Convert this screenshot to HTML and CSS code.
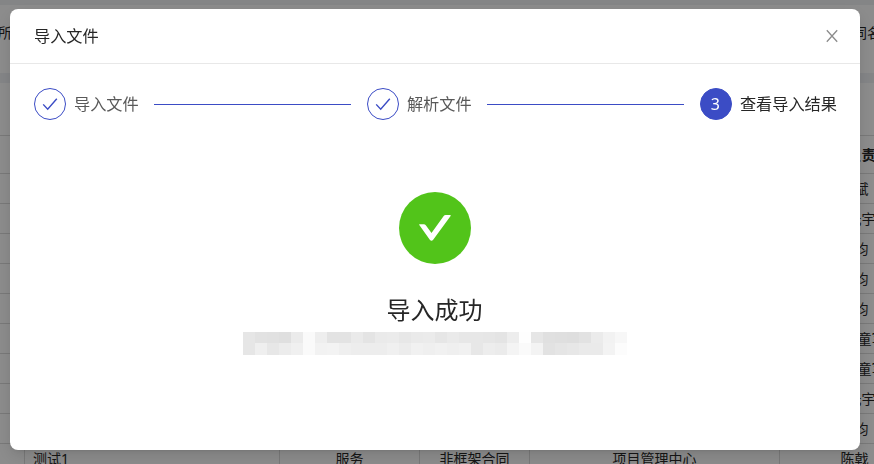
FILE: index.html
```html
<!DOCTYPE html>
<html lang="zh-CN">
<head>
<meta charset="utf-8">
<title>导入文件</title>
<link rel="stylesheet" href="styles.css">
</head>
<body>
<main class="page">
  <section class="filters"><span>所</span><span>同名</span></section>
  <section class="card">
    <div class="table">
      <div class="row head"><i></i><i></i><i></i><i></i><i></i><b>项目负责人</b></div>
      <div class="row"><i></i><i></i><i></i><i></i><i></i><span>陈斌</span></div>
      <div class="row"><i></i><i></i><i></i><i></i><i></i><span>陈元宇</span></div>
      <div class="row"><i></i><i></i><i></i><i></i><i></i><span>陈均</span></div>
      <div class="row"><i></i><i></i><i></i><i></i><i></i><span>陈均</span></div>
      <div class="row"><i></i><i></i><i></i><i></i><i></i><span>陈均</span></div>
      <div class="row"><i></i><i></i><i></i><i></i><i></i><span class="shift">陈童军</span></div>
      <div class="row"><i></i><i></i><i></i><i></i><i></i><span class="shift">陈童军</span></div>
      <div class="row"><i></i><i></i><i></i><i></i><i></i><span>陈元宇</span></div>
      <div class="row"><i></i><i></i><i></i><i></i><i></i><span>陈均</span></div>
      <div class="row"><i></i><span class="left">测试1</span><span>服务</span><span>非框架合同</span><span>项目管理中心</span><span>陈戟</span></div>
    </div>
  </section>
</main>
<div class="mask">
  <div class="modal" role="dialog">
    <header class="modal-header">
      <span>导入文件</span>
      <svg class="close" viewBox="0 0 14 14"><path d="M1.8 1.2 12.2 12.8M12.2 1.2 1.8 12.8"/></svg>
    </header>
    <div class="steps">
      <div class="step">
        <span class="dot"><svg viewBox="0 0 16 16"><path d="M1.2 8.4 5.7 13.3 14.8 2.7"/></svg></span>
        <span class="label">导入文件</span><span class="line"></span>
      </div>
      <div class="step">
        <span class="dot"><svg viewBox="0 0 16 16"><path d="M1.2 8.4 5.7 13.3 14.8 2.7"/></svg></span>
        <span class="label">解析文件</span><span class="line"></span>
      </div>
      <div class="step current">
        <span class="dot">3</span><span class="label">查看导入结果</span>
      </div>
    </div>
    <div class="result">
      <svg class="success" viewBox="0 0 72 72"><circle cx="36" cy="36" r="36"/><path d="M51.1 23H46.6Q45.4 23 44.7 24L32.5 41 26.8 33.3Q26.1 32.3 24.9 32.3H20.5Q19.8 32.3 20.3 33L30.8 47.7Q32.5 50 34.2 47.7L51.6 24Q52.1 23 51.1 23Z"/></svg>
      <h1>导入成功</h1>
      <svg class="mosaic" viewBox="0 0 384 24" id="mosaic"></svg>
    </div>
  </div>
</div>
<script src="mosaic.js"></script>
</body>
</html>
```
FILE: mosaic.js
```js
// Two rows of grey levels, one block every 12px.
const rows = [
  [230,226,225,223,235,250,238,227,227,234,228,234,235,231,234,235,230,234,231,231,230,228,237,254,230,224,223,222,226,235,242,247],
  [230,239,231,236,240,250,242,243,239,237,237,237,240,236,241,239,241,239,241,231,237,235,244,250,243,226,229,231,234,234,243,252]
];
const svg = document.getElementById("mosaic");
rows.forEach((row, r) => row.forEach((v, c) => {
  const el = document.createElementNS("http://www.w3.org/2000/svg", "rect");
  el.setAttribute("x", c * 12);
  el.setAttribute("y", r ? 11 : 0);
  el.setAttribute("width", 12);
  el.setAttribute("height", r ? 12 : 11);
  el.setAttribute("fill", `rgb(${v},${v},${v})`);
  svg.appendChild(el);
}));
```
FILE: styles.css
```css
* { box-sizing: border-box; }
body {
  margin: 0;
  overflow: hidden;
  font: 14px/22px "Noto Sans", "Noto Sans CJK SC", sans-serif;
  color: #262626;
}
.page {
  height: 464px;
  overflow: hidden;
  padding-top: 5px;
  background: #f0f2f5;
}
.filters {
  height: 68px;
  margin-bottom: 10px;
  padding-top: 17px;
  display: flex;
  justify-content: space-between;
  background: #fff;
  white-space: nowrap;
}
.filters span:first-child { margin-left: -2px; }
.filters span:last-child { margin-right: -7px; }
.card {
  height: 400px;
  padding-top: 52px;
  background: #fff;
}
.table { width: 930px; border-top: 1px solid #dcdcdc; }
.row {
  display: grid;
  grid-template-columns: 25px 255px 140px 110px 250px 150px;
  height: 30px;
  line-height: 29px;
  text-align: center;
  border-bottom: 1px solid #dcdcdc;
}
.row > * { border-right: 1px solid #dcdcdc; }
.row .left { text-align: left; padding-left: 8px; }
.row .shift { padding-left: 20px; }
.head { height: 38px; line-height: 37px; }
.mask {
  position: fixed;
  inset: 0;
  padding: 9px 14px 14px 10px;
  background: rgba(0, 0, 0, .45);
}
.modal {
  height: 441px;
  border-radius: 8px;
  background: #fff;
  box-shadow: 0 6px 16px rgba(0, 0, 0, .12), 0 3px 6px -4px rgba(0, 0, 0, .16);
  font-size: 16.2px;
}
.modal-header {
  height: 55px;
  padding: 0 21px 0 24px;
  display: flex;
  align-items: center;
  justify-content: space-between;
  border-bottom: 1px solid #e8e8e8;
}
.close { width: 14px; height: 14px; fill: none; stroke: #8c8c8c; stroke-width: 1.3; }
.steps {
  display: flex;
  gap: 16px;
  padding: 24px 23px 0 24px;
  line-height: 32px;
}
.step { flex: 1; display: flex; white-space: nowrap; }
.current { flex: none; }
.dot {
  flex: none;
  width: 32px;
  height: 32px;
  margin-right: 8px;
  display: flex;
  align-items: center;
  justify-content: center;
  border: 1px solid #3b4cc5;
  border-radius: 50%;
}
.dot svg { width: 16px; height: 16px; fill: none; stroke: #3b4cc5; stroke-width: 1.4; }
.label { color: #595959; }
.line { flex: 1; height: 1px; margin: 16px 0 0 15px; background: #3b4cc5; }
.current .dot { background: #3b4cc5; color: #fff; font-size: 16px; padding-right: 1px; }
.current .label { color: #262626; }
.result {
  padding-top: 72px;
  display: flex;
  flex-direction: column;
  align-items: center;
}
.success { width: 72px; height: 72px; fill: #52c41a; }
.success path { fill: #fff; }
h1 { margin: 27px 0 0; padding-right: 1px; font-size: 24px; line-height: 38px; font-weight: 400; }
.mosaic { width: 384px; height: 24px; margin-top: 3px; shape-rendering: crispEdges; }
```
